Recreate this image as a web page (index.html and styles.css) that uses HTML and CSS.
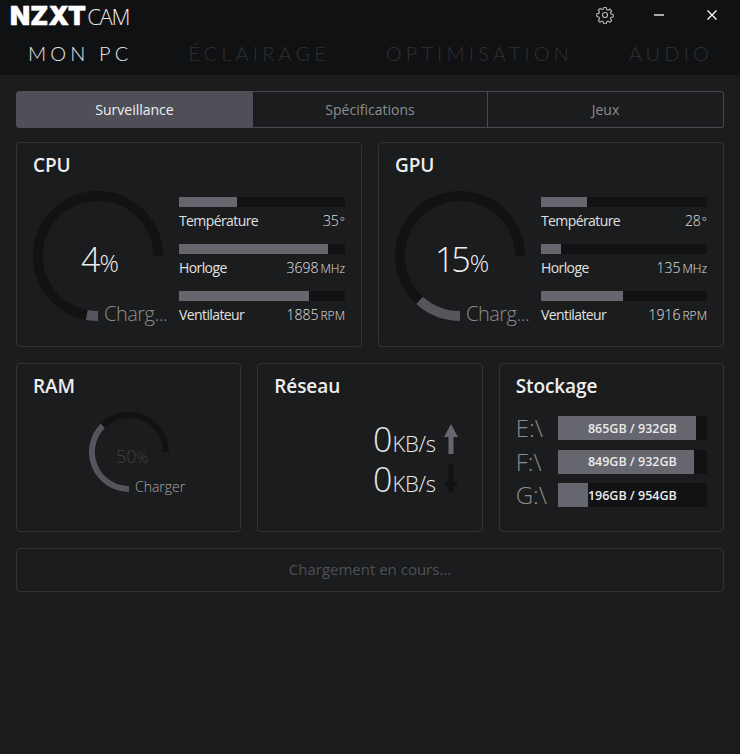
FILE: index.html
```html
<!DOCTYPE html>
<html lang="fr">
<head>
<meta charset="utf-8">
<title>NZXT CAM</title>
<link rel="stylesheet" href="styles.css">
</head>
<body>
<header class="header">
  <div class="titlebar">
    <div class="logo"><span class="logo-nzxt">NZXT</span><span class="logo-cam">CAM</span></div>
    <div class="win-controls">
      <svg class="gear" width="18" height="18" viewBox="0 0 24 24" fill="none" stroke="#b4b4b4" stroke-width="1.5" stroke-linejoin="round"><circle cx="12" cy="12" r="3.4"/><path d="M10.3 2h3.4l.5 2.9 1.9.8 2.4-1.7 2.4 2.4-1.7 2.4.8 1.9 2.9.5v3.4l-2.9.5-.8 1.9 1.7 2.4-2.4 2.4-2.4-1.7-1.9.8-.5 2.9h-3.4l-.5-2.9-1.9-.8-2.4 1.7-2.4-2.4 1.7-2.4-.8-1.9L1 13.700v-3.400l2.900-.5.8-1.900L3 5.500 5.400 3.100l2.400 1.700 1.900-.8z"/></svg>
      <span class="minimize"></span>
      <svg class="close" width="10" height="10" viewBox="0 0 10 10" stroke="#fff" stroke-width="1.3"><path d="M.5.5l9 9M9.500.5l-9 9"/></svg>
    </div>
  </div>
  <nav class="nav">
    <span class="nav-item active">MON PC</span>
    <span class="nav-item">ÉCLAIRAGE</span>
    <span class="nav-item">OPTIMISATION</span>
    <span class="nav-item">AUDIO</span>
  </nav>
</header>
<main class="main">
  <div class="tabs">
    <div class="tab tab-active">Surveillance</div>
    <div class="tab tab-mid">Spécifications</div>
    <div class="tab tab-last">Jeux</div>
  </div>

  <div class="row-top">
    <section class="card card-big">
      <h2 class="card-title">CPU</h2>
      <div class="big-body">
        <div class="gauge">
          <svg width="130" height="130" viewBox="0 0 130 130" fill="none" stroke-width="10"><path class="arc-track" d="M65 125A60 60 0 1 1 125 65"/><path class="arc-fill" d="M65 125A60 60 0 0 1 53.800 124"/></svg>
          <div class="gauge-value"><span class="num">4</span><span class="pct">%</span></div>
          <div class="gauge-label">Charg...</div>
        </div>
        <div class="stats">
          <div class="stat"><div class="bar"><div class="bar-fill" style="width:35%"></div></div><div class="stat-line"><span class="stat-name">Température</span><span>35<span class="deg">°</span></span></div></div>
          <div class="stat"><div class="bar"><div class="bar-fill" style="width:90%"></div></div><div class="stat-line"><span class="stat-name">Horloge</span><span>3698<span class="unit">MHz</span></span></div></div>
          <div class="stat"><div class="bar"><div class="bar-fill" style="width:78.500%"></div></div><div class="stat-line"><span class="stat-name">Ventilateur</span><span>1885<span class="unit">RPM</span></span></div></div>
        </div>
      </div>
    </section>
    <section class="card card-big">
      <h2 class="card-title">GPU</h2>
      <div class="big-body">
        <div class="gauge">
          <svg width="130" height="130" viewBox="0 0 130 130" fill="none" stroke-width="10"><path class="arc-track" d="M65 125A60 60 0 1 1 125 65"/><path class="arc-fill" d="M65 125A60 60 0 0 1 24.600 109.400"/></svg>
          <div class="gauge-value"><span class="num">15</span><span class="pct">%</span></div>
          <div class="gauge-label">Charg...</div>
        </div>
        <div class="stats">
          <div class="stat"><div class="bar"><div class="bar-fill" style="width:28%"></div></div><div class="stat-line"><span class="stat-name">Température</span><span>28<span class="deg">°</span></span></div></div>
          <div class="stat"><div class="bar"><div class="bar-fill" style="width:12%"></div></div><div class="stat-line"><span class="stat-name">Horloge</span><span>135<span class="unit">MHz</span></span></div></div>
          <div class="stat"><div class="bar"><div class="bar-fill" style="width:49.500%"></div></div><div class="stat-line"><span class="stat-name">Ventilateur</span><span>1916<span class="unit">RPM</span></span></div></div>
        </div>
      </div>
    </section>
  </div>

  <div class="row-mid">
    <section class="card card-small">
      <h2 class="card-title">RAM</h2>
      <div class="ram-gauge">
        <svg width="80" height="80" viewBox="0 0 80 80" fill="none" stroke-width="6"><path class="arc-track" d="M40 77A37 37 0 1 1 77 40"/><path class="arc-fill" d="M40 77A37 37 0 0 1 13.800 13.800"/></svg>
        <div class="ram-value">50<span class="ram-pct">%</span></div>
        <div class="ram-label">Charger</div>
      </div>
    </section>
    <section class="card card-small">
      <h2 class="card-title">Réseau</h2>
      <div class="net">
        <div class="net-row"><span class="net-num">0</span><span class="net-unit">KB/s</span>
          <svg class="net-arrow" width="14" height="30" viewBox="0 0 14 30"><path class="arrow-up" d="M7 0L14 13H9.500V30H4.500V13H0z"/></svg></div>
        <div class="net-row"><span class="net-num">0</span><span class="net-unit">KB/s</span>
          <svg class="net-arrow" width="14" height="30" viewBox="0 0 14 30"><path class="arrow-down" d="M7 30L14 17H9.500V0H4.500V17H0z"/></svg></div>
      </div>
    </section>
    <section class="card card-small">
      <h2 class="card-title">Stockage</h2>
      <div class="drives">
        <div class="drive"><span class="drive-name">E:\</span><div class="drive-bar"><div class="drive-fill" style="width:92.800%"></div><span class="drive-text">865GB / 932GB</span></div></div>
        <div class="drive"><span class="drive-name">F:\</span><div class="drive-bar"><div class="drive-fill" style="width:91.100%"></div><span class="drive-text">849GB / 932GB</span></div></div>
        <div class="drive"><span class="drive-name">G:\</span><div class="drive-bar"><div class="drive-fill" style="width:20.500%"></div><span class="drive-text">196GB / 954GB</span></div></div>
      </div>
    </section>
  </div>

  <div class="loading">Chargement en cours...</div>
</main>
</body>
</html>
```
FILE: styles.css
```css
* { box-sizing: border-box; }
html, body { margin: 0; height: 100%; }
body {
  background: #1b1c1e;
  color: #e6e6e6;
  font-family: "Open Sans", "Noto Sans", sans-serif;
  overflow: hidden;
}
.header { height: 75px; background: #101113; }
.titlebar { display: flex; justify-content: space-between; height: 38px; padding: 0 23px 0 10px; }
.logo { display: flex; align-items: baseline; height: 31px; }
.logo-nzxt { font-family: Inter, sans-serif; font-weight: 900; font-size: 26px; line-height: 31px; color: #fff; letter-spacing: 0.2px; -webkit-text-stroke: 0.5px #fff; }
.logo-cam { font-weight: 300; font-size: 22px; line-height: 31px; color: #e8e8e8; margin-left: 1px; letter-spacing: -1.2px; }
.win-controls { display: flex; align-items: center; height: 30px; }
.gear { margin-right: 40px; }
.minimize { width: 10px; height: 2px; background: #a8a8a8; margin-right: 43px; }
.nav { display: flex; justify-content: space-between; padding: 0 31px 0 28px; height: 37px; }
.nav-item { font-family: Lato, sans-serif; font-weight: 300; font-size: 20px; line-height: 31px; letter-spacing: 4.15px; color: #2f3032; margin-right: -4px; }
.nav-item.active { color: #e8e8e8; }

.main { padding: 16px; display: flex; flex-direction: column; }
.tabs { display: flex; height: 37px; font-size: 14px; }
.tab { flex: 1; display: flex; align-items: center; justify-content: center; border: 1px solid #47494c; color: #8b8e91; }
.tab-active { flex: 0 0 237px; background: #4f4f58; border-color: #4f4f58; color: #f0f0f0; border-radius: 3px 0 0 3px; }
.tab-mid { flex: 0 0 235px; border-left: 0; }
.tab-last { border-left: 0; border-radius: 0 3px 3px 0; }

.row-top { display: flex; gap: 16px; margin-top: 14px; }
.row-mid { display: flex; gap: 16px; margin-top: 16px; }
.card { border: 1px solid #323335; border-radius: 4px; padding: 8px 16px 0; }
.card-big { flex: 1; height: 205px; }
.card-small { flex: 1; height: 169px; }
.card-title { margin: 0; font-size: 19px; line-height: 28px; font-weight: 600; color: #eeeeee; letter-spacing: -0.1px; }

.big-body { display: flex; gap: 16px; margin-top: 12px; }
.gauge { position: relative; width: 130px; height: 130px; flex: none; }
.gauge svg { display: block; }
.arc-track { stroke: #111214; }
.arc-fill { stroke: #55555e; }
.gauge-value { position: absolute; left: 0; right: -4px; top: 44px; text-align: center; font-weight: 300; line-height: 48px; color: #eeeeee; }
.num { font-size: 34px; letter-spacing: -3px; }
.pct { font-size: 24px; margin-left: 2px; }
.gauge-label { position: absolute; left: 71px; top: 109px; font-size: 20px; line-height: 28px; font-weight: 300; color: #8c8c8c; white-space: nowrap; letter-spacing: -0.5px; }

.stats { flex: 1; padding-top: 6px; display: flex; flex-direction: column; gap: 13px; }
.bar { height: 10px; background: #111214; }
.bar-fill { height: 100%; background: #66666f; }
.stat-line { display: flex; justify-content: space-between; align-items: baseline; height: 24px; font-size: 14px; line-height: 28px; color: #e0e0e0; font-weight: 300; }
.stat-name { letter-spacing: -0.6px; font-weight: 400; }
.deg { font-size: 12px; margin-left: 1px; }
.unit { font-size: 12px; margin-left: 2px; }

.ram-gauge { position: relative; width: 80px; height: 80px; margin: 12px 0 0 56px; }
.ram-gauge svg { display: block; }
.ram-value { position: absolute; left: 27px; top: 31px; font-size: 18px; line-height: 26px; font-weight: 300; color: #3f4042; }
.ram-pct { font-size: 14px; }
.ram-label { position: absolute; left: 46px; top: 65px; font-size: 14px; line-height: 20px; color: #a6a6a6; font-weight: 300; white-space: nowrap; }

.net { display: flex; flex-direction: column; gap: 4px; margin-top: 21px; padding-right: 8px; }
.net-row { display: flex; justify-content: flex-end; align-items: center; height: 36px; color: #e8e8e8; font-weight: 300; }
.net-num { font-size: 34px; line-height: 36px; }
.net-unit { font-size: 22px; line-height: 36px; margin-top: 8px; letter-spacing: -0.3px; }
.net-arrow { margin-left: 8px; flex: none; }
.arrow-up { fill: #66666f; }
.arrow-down { fill: #111214; }

.drives { display: flex; flex-direction: column; gap: 9.500px; margin-top: 16px; }
.drive { display: flex; align-items: center; height: 24px; }
.drive-name { width: 42px; font-size: 24px; line-height: 24px; font-weight: 300; color: #8c8c8c; }
.drive-bar { position: relative; flex: 1; height: 24px; background: #111214; display: flex; align-items: center; justify-content: center; }
.drive-fill { position: absolute; left: 0; top: 0; bottom: 0; background: #66666f; }
.drive-text { position: relative; font-size: 12.500px; font-weight: 600; color: #eaeaea; white-space: nowrap; }

.loading { margin-top: 16px; height: 44px; padding-bottom: 2px; border: 1px solid #323335; border-radius: 4px; display: flex; align-items: center; justify-content: center; font-size: 15px; color: #4c5156; }
```
